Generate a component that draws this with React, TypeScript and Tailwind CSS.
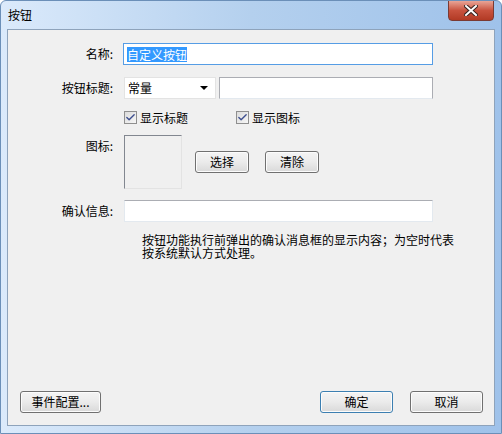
import { Check } from 'lucide-react';

const font = { fontFamily: '"Noto Sans CJK SC", "Liberation Sans", sans-serif' };

const Btn = ({ label, primary = false, className = '' }: { label: string; primary?: boolean; className?: string }) => (
  <button
    className={`flex h-[22px] items-center justify-center rounded-[3px] border bg-gradient-to-b from-[#f4f4f4] via-[#ebebeb] to-[#d9d9d9] text-[12px] leading-none text-black shadow-[inset_0_0_0_1px_#fcfcfc] ${
      primary ? 'border-[#3c7fb1] shadow-[inset_0_0_0_1px_#48d4f8]' : 'border-[#707070]'
    } ${className}`}
  >
    {label}
  </button>
);

const CheckBox = ({ label }: { label: string }) => (
  <label className="flex items-center gap-[3px] text-[12px] leading-none">
    <span className="flex h-[13px] w-[13px] items-center justify-center border border-[#8f8f8f] bg-gradient-to-br from-[#dcdcdc] to-[#f6f6f6]">
      <Check size={11} strokeWidth={3} className="text-[#3e4f8f]" />
    </span>
    {label}
  </label>
);

const Label = ({ text }: { text: string }) => (
  <div className="w-[116px] shrink-0 pr-[11px] text-right text-[12px] leading-none">{text}</div>
);

export default function App() {
  return (
    <div
      style={font}
      className="relative flex h-[434px] w-[502px] flex-col overflow-hidden rounded-t-[6px] border border-[#6b8fb8] bg-gradient-to-r from-[#dbeafb] via-[#b4d0ee] to-[#9fc2ea] text-black"
    >
      <div className="flex h-[28px] items-center pl-[7px] text-[12px]">按钮</div>
      <button className="absolute right-[7px] top-[-1px] flex h-[21px] w-[46px] items-center justify-center rounded-b-[4px] border border-[#7a3a33] bg-gradient-to-b from-[#e8a496] via-[#c8523e] to-[#b23a24]">
        <svg width="14" height="11" viewBox="0 0 14 11">
          <path d="M2 1 L12 10 M12 1 L2 10" stroke="#3a2420" strokeWidth="4" strokeLinecap="square" />
          <path d="M2 1 L12 10 M12 1 L2 10" stroke="#ffffff" strokeWidth="2" strokeLinecap="square" />
        </svg>
      </button>

      <div className="mx-[6px] mb-[7px] flex flex-1 flex-col border border-[#8ea3bb] bg-[#f0f0f0]">
        <div className="flex flex-1 flex-col pr-[61px] pt-[13px]">
          <div className="flex items-center">
            <Label text="名称:" />
            <div className="-ml-[1px] flex h-[22px] flex-1 items-center border border-[#569de5] bg-white px-[3px] text-[12px]">
              <span className="bg-[#3399ff] leading-[15px] text-white">自定义按钮</span>
            </div>
          </div>

          <div className="mt-[12px] flex items-center">
            <Label text="按钮标题:" />
            <div className="flex h-[22px] w-[92px] items-center justify-between border border-[#e3e3e3] bg-white pl-[3px] pr-[7px] text-[12px]">
              常量
              <span className="h-0 w-0 border-x-[4px] border-t-[4px] border-x-transparent border-t-black" />
            </div>
            <div className="ml-[3px] h-[22px] flex-1 border border-[#abadb3] border-b-[#e3e9ef] bg-white" />
          </div>

          <div className="mt-[12px] flex items-center">
            <div className="w-[116px] shrink-0" />
            <div className="w-[112px]">
              <CheckBox label="显示标题" />
            </div>
            <CheckBox label="显示图标" />
          </div>

          <div className="mt-[11px] flex items-start">
            <div className="pt-[5px]">
              <Label text="图标:" />
            </div>
            <div className="h-[54px] w-[58px] border border-[#828790] border-b-[#e3e3e3] border-r-[#e3e3e3] bg-[#f0f0f0]" />
            <div className="mt-[16px] flex gap-[16px] pl-[13px]">
              <Btn label="选择" className="w-[54px]" />
              <Btn label="清除" className="w-[54px]" />
            </div>
          </div>

          <div className="mt-[11px] flex items-center">
            <Label text="确认信息:" />
            <div className="h-[22px] flex-1 border border-[#e3e9ef] border-t-[#abadb3] bg-white" />
          </div>

          <div className="mt-[11px] whitespace-nowrap pl-[134px] text-[12px] leading-[13px]">
            按钮功能执行前弹出的确认消息框的显示内容；为空时代表
            <br />
            按系统默认方式处理。
          </div>
        </div>

        <div className="flex items-center pb-[12px] pl-[12px] pr-[11px]">
          <Btn label="事件配置..." className="w-[81px]" />
          <div className="flex-1" />
          <Btn label="确定" primary className="w-[73px]" />
          <Btn label="取消" className="ml-[17px] w-[73px]" />
        </div>
      </div>
    </div>
  );
}
